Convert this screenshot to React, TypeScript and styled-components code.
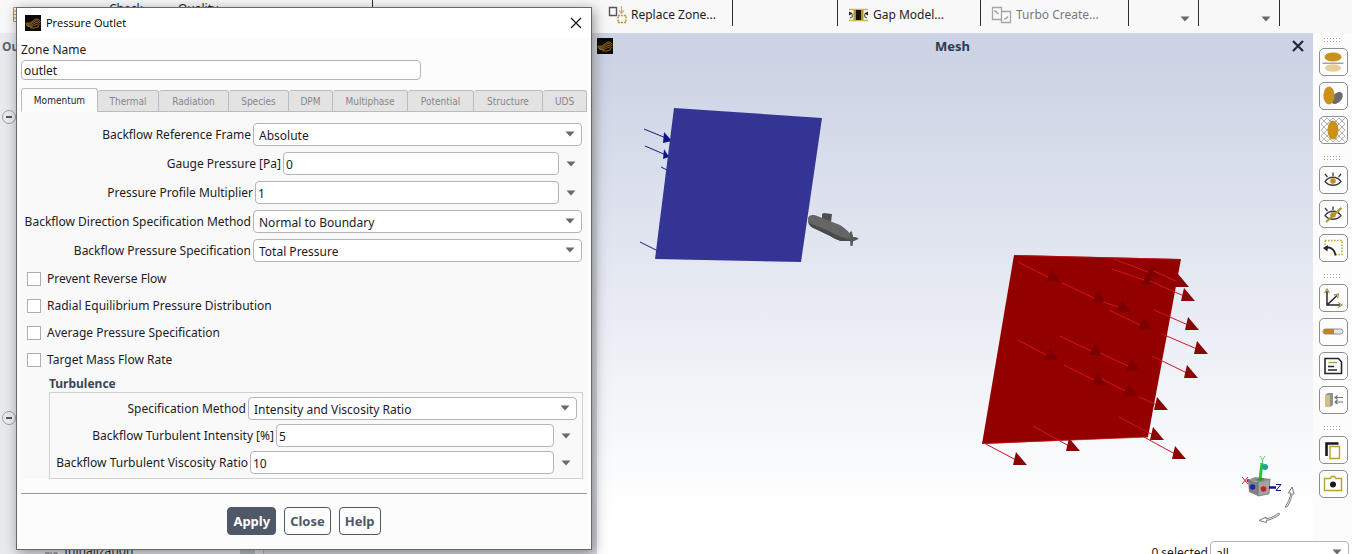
import React from "react";
import styled, { createGlobalStyle, css } from "styled-components";

const GlobalStyle = createGlobalStyle`
  *, *::before, *::after { box-sizing: border-box; }
  body {
    margin: 0;
    background: #fbfbfc;
    color: #1c1c1e;
    font-family: "Noto Sans", "Open Sans", sans-serif;
    font-size: 12px;
    line-height: 16px;
  }
  button, input, select { font: inherit; color: inherit; margin: 0; }
`;

const Window = styled.div`
  position: relative;
  display: flex;
  flex-direction: column;
  height: 100vh;
  min-height: 550px;
  overflow: hidden;
`;

/* ---------- ribbon ---------- */

const Ribbon = styled.header`
  display: flex;
  flex: none;
  height: 33px;
  padding-bottom: 7px;
  background: #f8f8f9;
`;

const RibbonCell = styled.div<{ $width: number; $end?: boolean; $low?: boolean; $inset?: number }>`
  display: flex;
  align-items: ${(p) => (p.$low ? "flex-end" : "center")};
  justify-content: ${(p) => (p.$end ? "flex-end" : "flex-start")};
  width: ${(p) => p.$width}px;
  flex: none;
  padding: 4px ${(p) => p.$inset ?? 8}px ${(p) => (p.$low ? 4 : 0)}px 10px;
  border-right: 1px solid #2c2c2e;
`;

const RibbonButton = styled.button`
  display: flex;
  align-items: center;
  gap: 4px;
  padding: 0;
  border: 0;
  background: none;
  font-size: 12px;
  line-height: 16px;
  white-space: nowrap;
  &:disabled { color: #77787b; }
`;

const MeshTools = styled.div`
  display: flex;
  align-self: flex-start;
  flex: none;
  gap: 35px;
  margin-top: -3px;
  padding-left: 84px;
`;

/* ---------- workspace ---------- */

const Workspace = styled.div`
  display: flex;
  flex: 1;
  min-height: 0;
`;

const SidePanels = styled.div`
  display: flex;
  flex: none;
  width: 597px;
  background: #e9eaed;
`;

const Outline = styled.nav`
  display: flex;
  flex-direction: column;
  width: 240px;
  padding: 6px 2px 0;
  overflow: hidden;
`;

const OutlineTitle = styled.strong`
  flex: none;
  height: 71px;
  color: #5b6470;
  font-size: 12px;
  line-height: 16px;
`;

const TreeToggle = styled.button`
  display: flex;
  flex: none;
  align-items: center;
  justify-content: center;
  width: 14px;
  height: 14px;
  padding: 0;
  border: 1px solid #9c9ea1;
  border-radius: 50%;
  background: #eceded;
  &::before { content: ""; width: 6px; height: 2px; background: #55585c; }
`;

const TreeBranch = styled.div`
  flex: none;
  height: 301px;
`;

const TreeItem = styled.div`
  display: flex;
  align-items: center;
  gap: 6px;
  margin-top: 118px;
  padding-left: 42px;
`;

const ScrollTrack = styled.div`
  display: flex;
  width: 24px;
  background: #e4e5e7;
  border-right: 1px solid #b5b6b9;
  &::before { content: ""; width: 15px; background: #bcbec1; }
`;

const TaskPage = styled.section`
  flex: 1;
  background: #d9dbdf;
`;

/* ---------- graphics ---------- */

const Graphics = styled.main`
  display: flex;
  flex-direction: column;
  flex: 1;
  min-width: 0;
  background: linear-gradient(#ccd3e4 0, #ccd3e4 24px, #f4f6fa 380px, #ffffff 480px);
`;

const GraphicsHeader = styled.div`
  display: flex;
  flex: none;
  align-items: center;
  justify-content: space-between;
  height: 26px;
  padding-right: 9px;
`;

const GraphicsTitle = styled.h1`
  margin: 0;
  color: #2c3a50;
  font-size: 13px;
  line-height: 16px;
  font-weight: 700;
`;

const IconButton = styled.button`
  display: flex;
  align-items: center;
  justify-content: center;
  padding: 0;
  border: 0;
  background: none;
`;

const Scene = styled.svg`
  display: block;
  flex: 1;
  width: 100%;
  min-height: 0;
`;

const StatusBar = styled.footer`
  flex: none;
  height: 12px;
`;

const SelectionRow = styled.div`
  position: absolute;
  right: 3px;
  bottom: -10px;
  display: flex;
  align-items: center;
  gap: 2px;
`;

const ToolColumn = styled.aside`
  display: flex;
  flex-direction: column;
  align-items: center;
  gap: 12px;
  flex: none;
  width: 39px;
  padding: 5px 0 0 1px;
  background: #fcfcfd;
`;

const ToolGroup = styled.div`
  display: flex;
  flex-direction: column;
  align-items: center;
  gap: 6px;
`;

const ToolButton = styled.button`
  display: flex;
  align-items: center;
  justify-content: center;
  width: 29px;
  height: 28px;
  padding: 0;
  border: 1px solid #8b8e94;
  border-radius: 5px;
  background: #fdfdfd;
`;

/* ---------- dialog ---------- */

const Dialog = styled.section`
  position: absolute;
  left: 16px;
  top: 7px;
  width: 576px;
  border: 1px solid #66686b;
  background: #fcfcfd;
  box-shadow: 2px 3px 12px rgba(40, 44, 52, 0.5);
`;

const TitleBar = styled.header`
  display: flex;
  align-items: center;
  gap: 5px;
  height: 30px;
  padding: 0 9px 0 8px;
  background: #ffffff;
`;

const DialogTitle = styled.h2`
  flex: 1;
  margin: 0;
  font-family: "Open Sans", sans-serif;
  font-size: 11px;
  line-height: 16px;
  font-weight: 400;
  color: #000000;
`;

const DialogBody = styled.form`
  display: flex;
  flex-direction: column;
  padding: 4px 4px 14px;
`;

const ZoneField = styled.div`
  display: flex;
  flex-direction: column;
  gap: 2px;
  width: 400px;
`;

const controlFrame = css`
  border: 1px solid #b2b5ba;
  border-radius: 4px;
  background: #ffffff;
  outline: none;
`;

const TextInput = styled.input<{ $compact?: boolean }>`
  ${controlFrame}
  flex: 1;
  min-width: 0;
  height: ${(p) => (p.$compact ? 20 : 23)}px;
  flex-basis: ${(p) => (p.$compact ? "20px" : "0")};
  padding: ${(p) => (p.$compact ? "0 2px" : "2px 2px 0")};
`;

const Tabs = styled.div`
  display: grid;
  grid-template-columns: 77fr 61fr 70fr 60fr 44fr 75fr 66fr 69fr 44fr;
  align-items: end;
  height: 24px;
  margin-top: 8px;
`;

const Tab = styled.button<{ $active?: boolean }>`
  height: ${(p) => (p.$active ? 24 : 22)}px;
  padding: 2px 0 0;
  border: 1px solid #b9bbbf;
  border-left-width: ${(p) => (p.$active ? 1 : 0)}px;
  border-bottom-color: ${(p) => (p.$active ? "#fcfcfd" : "#b9bbbf")};
  border-radius: 3px 3px 0 0;
  background: ${(p) => (p.$active ? "#fcfcfd" : "#e3e3e4")};
  color: ${(p) => (p.$active ? "#1c1c1e" : "#85878a")};
  font-family: "DejaVu Sans Condensed", "Noto Sans", sans-serif;
  font-size: 10px;
  line-height: 16px;
`;

const Fields = styled.div<{ $gap: number }>`
  display: flex;
  flex-direction: column;
  gap: ${(p) => p.$gap}px;
`;

const MomentumPanel = styled.div`
  padding: 11px 5px 0 0;
  background: #f9f9fa;
`;

const FieldRow = styled.div`
  display: flex;
  align-items: center;
  height: 23px;
`;

const FieldLabel = styled.label<{ $width: number }>`
  flex: none;
  width: ${(p) => p.$width}px;
  padding-right: 2px;
  text-align: right;
  white-space: nowrap;
`;

const SelectBox = styled.div`
  position: relative;
  display: flex;
  flex: 1;
  min-width: 0;
  > svg { position: absolute; right: 7px; top: 8px; pointer-events: none; }
`;

const SelectionBox = styled(SelectBox)`
  flex: none;
  width: 139px;
`;

const Select = styled.select`
  ${controlFrame}
  appearance: none;
  width: 100%;
  height: 23px;
  padding: 2px 20px 0 5px;
`;

const MenuButton = styled(IconButton)`
  width: 23px;
  height: 23px;
`;

const CheckList = styled.div`
  display: flex;
  flex-direction: column;
  padding: 3px 0 0 6px;
`;

const CheckRow = styled.label`
  display: flex;
  align-items: center;
  gap: 6px;
  height: 27px;
`;

const CheckBox = styled.input`
  appearance: none;
  width: 14px;
  height: 14px;
  margin: 0;
  border: 1px solid #acaeb2;
  background: #ffffff;
  &:checked { background: #4e5866; }
`;

const Group = styled.section`
  padding-left: 28px;
`;

const GroupTitle = styled.h3`
  margin: 0;
  padding: 4px 0 1px;
  color: #3d4654;
  font-size: 12px;
  line-height: 14px;
  font-weight: 700;
`;

const GroupFrame = styled.div`
  padding: 4px 5px;
  margin-right: -1px;
  border: 1px solid #cfd1d4;
`;

const Actions = styled.div`
  display: flex;
  justify-content: center;
  gap: 8px;
  margin-top: 14px;
  padding-top: 13px;
  border-top: 1px solid #97999d;
`;

const ActionButton = styled.button<{ $primary?: boolean }>`
  height: 28px;
  padding: 0 5px;
  border: 1px solid #4e5866;
  border-radius: 4px;
  background: ${(p) => (p.$primary ? "#4e5866" : "#fdfdfd")};
  color: ${(p) => (p.$primary ? "#ffffff" : "#4e5866")};
  font-size: 13px;
  line-height: 16px;
  font-weight: 700;
`;

/* ---------- drawings ---------- */

const Caret = () => (
  <svg width="10" height="6" viewBox="0 0 10 6" aria-hidden="true">
    <path d="M0.5 0.5h9L5 5.5z" fill="#66696e" />
  </svg>
);

const Cross = ({ size, weight, color }: { size: number; weight: number; color: string }) => (
  <svg width={size} height={size} viewBox="0 0 12 12" aria-hidden="true">
    <path d="M1 1l10 10M11 1L1 11" stroke={color} strokeWidth={weight} fill="none" />
  </svg>
);

const Grip = () => (
  <svg width="18" height="4" viewBox="0 0 18 4" aria-hidden="true">
    <path d="M0 .5h18M0 3.500h18" stroke="#a2a4a8" strokeDasharray="1 2" />
  </svg>
);

const Logo = () => (
  <svg width="16" height="16" viewBox="0 0 16 16" aria-hidden="true">
    <path fill="#0c0905" d="M0 0h16v16H0z" />
    <g fill="none" stroke="#b07c22" strokeWidth="0.900">
      <path d="M.5 8.500c2-1 3 .3 5-.8S9.500 4 11.500 4s3 1.500 3.800 2.500" />
      <path d="M1 9.500c2.500-.8 3.500.2 5.500-1S10 5.500 11.800 5.700s2.500 1.300 3.400 2.300" />
      <path d="M1.500 10.500c2.500-.4 4 .2 6-1s3-2 4.500-1.800 2 1 3 2" />
      <path d="M2.500 11.500c2.500 0 4 .2 5.800-.7s2.700-1.500 4-1.100 1.500.8 2 1.300" />
      <path d="M5 12.700c3 .6 6 .4 9-1.200" />
    </g>
  </svg>
);

const ReplaceIcon = () => (
  <svg width="19" height="18" viewBox="0 0 19 18" fill="none" aria-hidden="true">
    <path d="M1.500 1.500h7v8h-7z" stroke="#55575b" strokeWidth="1.400" />
    <path d="M13.500 0v7M11 4.500l2.500 2.800L16 4.500" stroke="#c9b35c" strokeWidth="1.200" />
    <path d="M10 9.500h8v7h-8z" stroke="#b59a2b" strokeWidth="1.500" strokeDasharray="2 1" />
  </svg>
);

const GapIcon = () => (
  <svg width="21" height="14" viewBox="0 0 21 14" fill="none" aria-hidden="true">
    <path d="M1 1.500h19M1 12.500h19" stroke="#cdb54e" strokeWidth="1.500" />
    <path d="M5.500 2h10v10h-10z" fill="#b3922a" />
    <path d="M8 2h5v10H8z" fill="#15130d" />
    <path d="M2 9.500c3 .5 3-3 1-4.500M19 9.500c-3 .5-3-3-1-4.500" stroke="#6b5f33" strokeWidth="1.200" />
    <path d="M1 3.500l3.500 2-3.500 2zM20 3.500l-3.500 2 3.500 2z" fill="#222" />
  </svg>
);

const TurboIcon = () => (
  <svg width="21" height="18" viewBox="0 0 21 18" fill="none" stroke="#a3a5a8" aria-hidden="true">
    <path d="M1.500 1.500h9v12h-9zM10.500 5.500h9v11h-9z" strokeWidth="1.300" />
    <path d="M3 5c2 0 3 1.500 4.500 3M13 13c2 0 3-1 4-2.500" strokeWidth="1.400" />
  </svg>
);

const GridIcon = () => (
  <svg width="15" height="16" viewBox="0 0 15 16" aria-hidden="true">
    <path d="M3.500.500h11v14h-11zM3.500 4h11M3.500 7.500h11M3.500 11h11M9 .500v14" fill="none" stroke="#b59a2b" />
  </svg>
);

const ToolIcon = ({ children }: { children: React.ReactNode }) => (
  <svg width="24" height="24" viewBox="0 0 24 24" fill="none" aria-hidden="true">
    {children}
  </svg>
);

const eye = (
  <>
    <path d="M4 13.500C8 7.800 16 7.800 20 13.500 16 18.500 8 18.500 4 13.500z" stroke="#3a3c40" strokeWidth="1.300" />
    <path d="M12 8V4.500M6.500 9L4 6M17.500 9L20 6" stroke="#3a3c40" strokeWidth="1.300" />
    <circle cx="12" cy="13" r="2.800" fill="#c9861d" />
  </>
);

const toolGroups: { label: string; icon: React.ReactNode }[][] = [
  [
    {
      label: "Mirror",
      icon: (
        <>
          <ellipse cx="12" cy="7" rx="8.500" ry="4.500" fill="#c8921b" />
          <path d="M1.500 13.200h21" stroke="#77797d" />
          <ellipse cx="12" cy="18" rx="8" ry="3.800" fill="#e8cf98" />
        </>
      ),
    },
    {
      label: "Shadow",
      icon: (
        <>
          <ellipse cx="16" cy="14" rx="4.500" ry="7" transform="rotate(42 16 14)" fill="#6a6b6f" />
          <ellipse cx="8" cy="11.500" rx="5.600" ry="9" fill="#c8921b" />
        </>
      ),
    },
    {
      label: "Transparency",
      icon: (
        <>
          <path d="M0 6L6 0M0 12L12 0M0 18L18 0M0 24L24 0M6 24L24 6M12 24L24 12M18 24l6-6M0 18l6 6M0 12l12 12M0 6l18 18M0 0l24 24M6 0l18 18M12 0l12 12M18 0l6 6" stroke="#b4b5b8" />
          <ellipse cx="12" cy="12" rx="5.500" ry="9.500" fill="#c8921b" />
        </>
      ),
    },
  ],
  [
    { label: "Show", icon: eye },
    {
      label: "Hide",
      icon: (
        <>
          {eye}
          <path d="M5 20L20.500 6" stroke="#a99b25" strokeWidth="2" />
        </>
      ),
    },
    {
      label: "Undo view",
      icon: (
        <>
          <path d="M4 4.500h17v14H15M4 4.500v5" stroke="#bfa72f" strokeWidth="1.400" strokeDasharray="1.500 1.500" />
          <path d="M3.500 12.500c5-2.500 10 0 11 7" stroke="#26272a" strokeWidth="1.800" />
          <path d="M2 12l5-3-.5 6.500z" fill="#26272a" />
        </>
      ),
    },
  ],
  [
    {
      label: "Axes",
      icon: (
        <>
          <path d="M6 5v14h13M6 19L16 9.500" stroke="#26272a" strokeWidth="1.500" />
          <path d="M3.500 7L6 3l2.500 4M17 16.500l4 2.500-4 2.500M13 9l4.500-1-1 4.500" stroke="#a99b55" strokeWidth="1.300" />
        </>
      ),
    },
    {
      label: "Ruler",
      icon: (
        <>
          <rect x="2" y="9" width="20" height="5" rx="2.500" fill="#dfe7e8" stroke="#8a8f92" />
          <path d="M4 9h9v5H4c-2.300-1-2.300-4 0-5z" fill="#c08423" />
        </>
      ),
    },
    {
      label: "Annotations",
      icon: (
        <>
          <path d="M4 4.500h13.500L20.500 8v11.500H4z" stroke="#26272a" strokeWidth="1.600" />
          <path d="M7.500 8.500H16" stroke="#a99b55" strokeWidth="1.300" />
          <path d="M7 12.500h6M7 16h9" stroke="#26272a" strokeWidth="1.500" />
        </>
      ),
    },
    {
      label: "Planes",
      icon: (
        <>
          <path d="M4 7l3-2h5v12l-3 2H4z" fill="#8f9193" />
          <path d="M4 7h5v12H4z" fill="#cfbf85" />
          <path d="M14 9.500h8M14 14h8M16.500 7.500l-2.500 2 2.500 2M16.500 12l-2.500 2 2.500 2" stroke="#75777b" strokeWidth="1.200" />
        </>
      ),
    },
  ],
  [
    {
      label: "Copy view",
      icon: (
        <>
          <path d="M5.500 18V5.500h12" stroke="#17181a" strokeWidth="2.600" />
          <path d="M9 8.500h9.500v12H9z" stroke="#b6a22c" strokeWidth="1.400" />
        </>
      ),
    },
    {
      label: "Save picture",
      icon: (
        <>
          <path d="M3.500 6.500H9l1.500-2h3l1.500 2h5.500v12h-17z" stroke="#b6a22c" strokeWidth="1.400" />
          <circle cx="12" cy="12.500" r="3" fill="#17181a" />
        </>
      ),
    },
  ],
];

/* Flow vectors: tail x, tail y, tip x, tip y */
const outletArrows = [
  [1154, 271, 1189, 287], [1150, 281, 1195, 301], [1154, 310, 1199, 330],
  [1162, 334, 1208, 354], [1152, 356, 1198, 378], [1139, 397, 1168, 410],
  [1119, 417, 1164, 440], [1144, 437, 1186, 459], [1033, 426, 1080, 451],
  [984, 443, 1027, 465],
];

/* Vectors seen through the outlet face */
const innerArrows = [
  [1018, 262, 1060, 282], [1062, 283, 1106, 303], [1103, 302, 1130, 312],
  [1109, 310, 1152, 330], [1114, 259, 1160, 277], [1112, 269, 1156, 285],
  [1018, 340, 1058, 360], [1060, 336, 1103, 356], [1100, 353, 1140, 371],
  [1064, 365, 1106, 385], [1102, 379, 1137, 396],
];

const MeshScene = () => (
  <Scene viewBox="597 59 716 483" preserveAspectRatio="xMidYMin slice" role="img" aria-label="Mesh view of inlet, outlet and submarine">
    <g stroke="#1a1a8c">
      <path d="M644 129l22 9M645 146l21 9M661 167l8 4M640 242l16 8" fill="none" />
      <path d="M664 132l8 9-9 2zM664 149l5 8-6 2z" fill="#12128a" stroke="none" />
    </g>
    <path d="M674 108L822 118 801 262 655 259z" fill="#343494" />
    <g>
      <path d="M822 214l2-1 8 1-1 8-9-2z" fill="#4d4f50" />
      <path d="M808 219c0-3 3-4.500 6-4 3 .5 8 3 13 5l13 5c5 3 9 7 13 12l6 1-5 3-13 0c-5-1-10-5-15-7l-13-7c-3-1.500-5-4-5-8z" fill="#636566" />
      <path d="M808 220c1 3 3 4 6 5l15 6c6 3 11 6 16 7l6 3-10 0c-5-1-10-5-15-7l-13-6c-3-1.500-5-4-5-8z" fill="#484a4b" />
      <path d="M850 232l1.500-1 2 7-1 8-2 0-.5-7zM845 239l10-2 3.500 2-5 2z" fill="#555758" />
    </g>
    <path d="M1014 255L1181 259 1148 437 982 444z" fill="#920000" />
    <path d="M1014 255.500L1181 259.500M982 443.500L1148 437" stroke="#d01010" strokeWidth="0.700" />
    {innerArrows.map(([x1, y1, x2, y2]) => (
      <g key={`${x1}-${y1}`}>
        <path d={`M${x1} ${y1}L${x2 - 12} ${y2 - 5}`} stroke="#d81414" />
        <path d={`M${x2} ${y2}l-14 -1 6 -11z`} fill="#7c0000" />
      </g>
    ))}
    {outletArrows.map(([x1, y1, x2, y2]) => (
      <g key={`${x1}-${y1}`}>
        <path d={`M${x1} ${y1}L${x2 - 11} ${y2 - 5}`} stroke="#d01428" />
        <path d={`M${x2} ${y2}l-14 0 3 -13z`} fill="#8a0606" />
      </g>
    ))}
    <g fill="none">
      <path d="M1260 479L1262 463" stroke="#27c43c" strokeWidth="3" />
      <path d="M1260 456l2.500 4 2.500-4M1262.500 460v3" stroke="#4ad45a" />
      <circle cx="1265" cy="467" r="3" fill="#1fa58c" />
      <path d="M1242 477l6 7M1248 477l-6 7" stroke="#d0202c" />
      <path d="M1247 480l4 2" stroke="#b01018" strokeWidth="3" />
      <path d="M1248 480l10 2v14l-9-4z" fill="#7f8183" />
      <path d="M1248 480l7-3 15 2-12 3z" fill="#8f9193" />
      <path d="M1258 482l12-3-1 15-11 2z" fill="#a2a3a5" stroke="#66686a" strokeWidth="0.700" />
      <path d="M1256 480l4-3 5 2-4 2z" fill="#21a535" />
      <circle cx="1252.500" cy="487" r="2.800" fill="#2028a0" />
      <circle cx="1263.500" cy="489" r="2.800" fill="#c0261c" />
      <path d="M1269 487.500h7" stroke="#14148c" strokeWidth="2.500" />
      <path d="M1276 484.500h5l-5 6h5" stroke="#14148c" />
      <path d="M1285 507c3-4 5-9 6-14l-2.500 0 3.500-6 2 7-1.800 0c-1 5-2.500 9-5.200 13z" fill="#fff" stroke="#77797c" />
      <path d="M1279 513c-4 3-8 5-13 6l0-2-7 3.500 7.500 2 0-2c5-1 9-3 13-6z" fill="#fff" stroke="#77797c" />
    </g>
  </Scene>
);

/* ---------- form parts ---------- */

type FieldProps = { id: string; label: string; labelWidth: number; value: string };

const SelectField = ({ id, label, labelWidth, value }: FieldProps) => (
  <FieldRow>
    <FieldLabel htmlFor={id} $width={labelWidth}>{label}</FieldLabel>
    <SelectBox>
      <Select id={id} defaultValue={value}>
        <option>{value}</option>
      </Select>
      <Caret />
    </SelectBox>
  </FieldRow>
);

const ValueField = ({ id, label, labelWidth, value }: FieldProps) => (
  <FieldRow>
    <FieldLabel htmlFor={id} $width={labelWidth}>{label}</FieldLabel>
    <TextInput id={id} defaultValue={value} />
    <MenuButton type="button" aria-label={`${label} options`}><Caret /></MenuButton>
  </FieldRow>
);

const tabs = ["Momentum", "Thermal", "Radiation", "Species", "DPM", "Multiphase", "Potential", "Structure", "UDS"];

const checks = [
  "Prevent Reverse Flow",
  "Radial Equilibrium Pressure Distribution",
  "Average Pressure Specification",
  "Target Mass Flow Rate",
];

const PressureOutletDialog = () => (
  <Dialog role="dialog" aria-labelledby="dialog-title">
    <TitleBar>
      <Logo />
      <DialogTitle id="dialog-title">Pressure Outlet</DialogTitle>
      <IconButton type="button" aria-label="Close dialog"><Cross size={12} weight={1.2} color="#111111" /></IconButton>
    </TitleBar>
    <DialogBody onSubmit={(e) => e.preventDefault()}>
      <ZoneField>
        <label htmlFor="zone">Zone Name</label>
        <TextInput id="zone" defaultValue="outlet" $compact />
      </ZoneField>
      <Tabs role="tablist">
        {tabs.map((name, i) => (
          <Tab key={name} type="button" role="tab" aria-selected={i === 0} $active={i === 0}>{name}</Tab>
        ))}
      </Tabs>
      <MomentumPanel role="tabpanel">
        <Fields $gap={6}>
          <SelectField id="frame" label="Backflow Reference Frame" labelWidth={232} value="Absolute" />
          <ValueField id="gauge" label="Gauge Pressure [Pa]" labelWidth={262} value="0" />
          <ValueField id="multiplier" label="Pressure Profile Multiplier" labelWidth={234} value="1" />
          <SelectField id="direction" label="Backflow Direction Specification Method" labelWidth={232} value="Normal to Boundary" />
          <SelectField id="pressure" label="Backflow Pressure Specification" labelWidth={232} value="Total Pressure" />
        </Fields>
        <CheckList>
          {checks.map((name) => (
            <CheckRow key={name}><CheckBox type="checkbox" />{name}</CheckRow>
          ))}
        </CheckList>
        <Group>
          <GroupTitle>Turbulence</GroupTitle>
          <GroupFrame>
            <Fields $gap={4}>
              <SelectField id="method" label="Specification Method" labelWidth={193} value="Intensity and Viscosity Ratio" />
              <ValueField id="intensity" label="Backflow Turbulent Intensity [%]" labelWidth={221} value="5" />
              <ValueField id="ratio" label="Backflow Turbulent Viscosity Ratio" labelWidth={195} value="10" />
            </Fields>
          </GroupFrame>
        </Group>
      </MomentumPanel>
      <Actions>
        <ActionButton type="submit" $primary>Apply</ActionButton>
        <ActionButton type="button">Close</ActionButton>
        <ActionButton type="button">Help</ActionButton>
      </Actions>
    </DialogBody>
  </Dialog>
);

export default function App() {
  return (
    <Window>
      <GlobalStyle />
      <Ribbon>
        <RibbonCell $width={373}>
          <GridIcon />
          <MeshTools>
            <RibbonButton type="button">Check</RibbonButton>
            <RibbonButton type="button">Quality</RibbonButton>
          </MeshTools>
        </RibbonCell>
        <RibbonCell $width={360} $end $inset={16}>
          <RibbonButton type="button"><ReplaceIcon />Replace Zone...</RibbonButton>
        </RibbonCell>
        <RibbonCell $width={105} />
        <RibbonCell $width={143}>
          <RibbonButton type="button"><GapIcon />Gap Model...</RibbonButton>
        </RibbonCell>
        <RibbonCell $width={148}>
          <RibbonButton type="button" disabled><TurboIcon />Turbo Create...</RibbonButton>
        </RibbonCell>
        <RibbonCell $width={70} $end $low>
          <IconButton type="button" aria-label="More domain tools"><Caret /></IconButton>
        </RibbonCell>
        <RibbonCell $width={81} $end $low>
          <IconButton type="button" aria-label="More zone tools"><Caret /></IconButton>
        </RibbonCell>
      </Ribbon>
      <Workspace>
        <SidePanels>
          <Outline aria-label="Outline">
            <OutlineTitle>Outline</OutlineTitle>
            <TreeBranch><TreeToggle type="button" aria-label="Collapse setup" /></TreeBranch>
            <TreeBranch>
              <TreeToggle type="button" aria-label="Collapse solution" />
              <TreeItem>
                <svg width="14" height="14" viewBox="0 0 14 14" aria-hidden="true">
                  <path d="M3 4h8M1 9h4v4M7 8v5M10 13V9h3v4" fill="none" stroke="#6a6d72" />
                </svg>
                Initialization
              </TreeItem>
            </TreeBranch>
          </Outline>
          <ScrollTrack />
          <TaskPage />
        </SidePanels>
        <Graphics>
          <GraphicsHeader>
            <Logo />
            <GraphicsTitle>Mesh</GraphicsTitle>
            <IconButton type="button" aria-label="Close mesh view"><Cross size={12} weight={2.2} color="#1f2a3a" /></IconButton>
          </GraphicsHeader>
          <MeshScene />
          <StatusBar />
        </Graphics>
        <ToolColumn>
          {toolGroups.map((group) => (
            <ToolGroup key={group[0].label}>
              <Grip />
              {group.map((tool) => (
                <ToolButton key={tool.label} type="button" aria-label={tool.label}>
                  <ToolIcon>{tool.icon}</ToolIcon>
                </ToolButton>
              ))}
            </ToolGroup>
          ))}
        </ToolColumn>
      </Workspace>
      <SelectionRow>
        <label htmlFor="selection">0 selected</label>
        <SelectionBox>
          <Select id="selection" defaultValue="all"><option>all</option></Select>
          <Caret />
        </SelectionBox>
      </SelectionRow>
      <PressureOutletDialog />
    </Window>
  );
}
